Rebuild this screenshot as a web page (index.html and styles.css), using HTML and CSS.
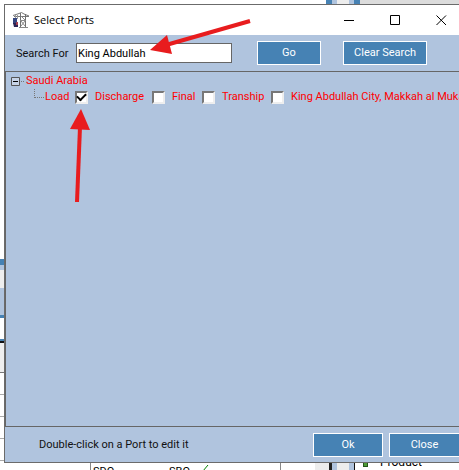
FILE: index.html
```
<!DOCTYPE html>
<html lang="en">
<head>
<meta charset="utf-8">
<title>Select Ports</title>
<link rel="stylesheet" href="styles.css">
</head>
<body>
<div class="desktop">
  <div class="strip-top"><span class="frame frame-top"></span></div>
  <div class="strip-left">
    <i class="blank"></i><i class="blue"></i><i class="pale"></i><i class="panel"></i><i class="steel"></i><i class="edge"></i><i class="gap"></i><i class="rule"></i><i class="head"></i><i class="cell"></i><i class="cell"></i><i class="cell"></i><i class="cell"></i>
  </div>
  <main class="dialog">
    <header class="titlebar">
      <svg class="app-icon" width="17" height="16" viewBox="0 0 17 16">
        <path d="M0 3.500 6 1.500M1 4.500H16M6 1.500 8.500 .5 11 2 16 4" fill="none" stroke="#777"/>
        <path d="M2.500 3V9M4.500 3V7" stroke="#999" fill="none"/>
        <path d="M7.500 1V15M12.500 2V15" fill="none" stroke="#707070"/>
        <path d="M7 8.500H13M8 9 12 14M12 9 8 14M8 4 12 8" fill="none" stroke="#8a8a8a"/>
        <path d="M6 15.500H15" stroke="#888"/>
        <path d="M0 6H4V12H0z" fill="#34457f"/><path d="M0 11H5V15H1z" fill="#2b2454"/><path d="M3 10H5V13H3z" fill="#a23f50"/>
      </svg>
      <h1>Select Ports</h1>
      <div class="window-controls">
        <button aria-label="Minimize"><svg width="11" height="11"><path d="M0 5.500H10"/></svg></button>
        <button aria-label="Maximize"><svg width="11" height="11"><path d="M.5 .5H9.500V9.500H.5z"/></svg></button>
        <button aria-label="Close window"><svg width="11" height="11"><path d="M.5 .5 10 10M10 .5 .5 10"/></svg></button>
      </div>
    </header>
    <form class="search">
      <label for="port">Search For</label>
      <input id="port" type="text" value="King Abdullah">
      <button class="btn go" type="button">Go</button>
      <button class="btn clear" type="button">Clear Search</button>
    </form>
    <section class="tree">
      <div class="country">
        <svg width="17" height="9"><path d="M.5 .5H8.500V8.500H.5z" fill="#c6d3e6" stroke="#555"/><path d="M2 4.500H7" stroke="#000"/><path d="M10 4.500H14" stroke="#777" stroke-dasharray="1 1"/></svg>
        <span>Saudi Arabia</span>
      </div>
      <div class="port">
        <svg class="branch" width="11" height="14"><path d="M.5 0V9M1 8.500H10" fill="none" stroke="#777" stroke-dasharray="1 1"/></svg>
        <label>Load <input type="checkbox" checked></label>
        <label>Discharge <input type="checkbox"></label>
        <label>Final <input type="checkbox"></label>
        <label>Tranship <input type="checkbox"></label>
        <span>King Abdullah City, Makkah al Mukarramah</span>
      </div>
    </section>
    <footer class="footer">
      <p>Double-click on a Port to edit it</p>
      <button class="btn ok">Ok</button>
      <button class="btn close">Close</button>
    </footer>
  </main>
  <div class="strip-bottom">
    <span class="col-a"></span>
    <span class="col-b"><b>SDO</b><b>SBO</b><svg width="8" height="7"><path d="M1 5 2 6 7 0" stroke="#008000" fill="none"/></svg></span>
    <span class="frame frame-bottom"></span>
    <span class="product"><i></i><em>Product</em></span>
  </div>
  <svg class="arrows" width="260" height="210" viewBox="0 0 260 210">
    <path d="M250 21 166 45" stroke="#e81c1e" stroke-width="4"/>
    <path d="M150 50 167 35 172 54z" fill="#e81c1e"/>
    <path d="M77 202 80 127" stroke="#e81c1e" stroke-width="4"/>
    <path d="M81 109 70 129 90 130z" fill="#e81c1e"/>
  </svg>
</div>
</body>
</html>
```
FILE: styles.css
```
* { box-sizing: border-box; }
body { margin: 0; font: 11px/16px Roboto, "Liberation Sans", sans-serif; color: #111; background: #fff; }
button, input { font: inherit; margin: 0; }
.desktop {
  position: relative;
  display: grid;
  grid-template: 4px 1fr 7px / 4px minmax(0, 1fr);
  height: 100vh;
  overflow: hidden;
}
.strip-top { grid-column: 1 / 3; display: flex; padding-left: 326px; }
.frame { background: linear-gradient(90deg, #4682b4 6px, #b0c4de 6px 11px, #ededed 11px 23px, #b0c4de 23px 28px, #4682b4 28px 34px, #dcdcdc 34px); }
.frame-top { flex: 1; }
.strip-left { display: flex; flex-direction: column; overflow: hidden; }
.strip-left i { flex: none; }
.blank { height: 255px; }
.blue { height: 6px; background: #4682b4; }
.pale { height: 5px; background: #b0c4de; }
.panel { height: 18px; background: #eee; }
.steel { height: 27px; background: #b0c4de; }
.edge { height: 3px; background: #4682b4; }
.gap { height: 21px; }
.rule { height: 4px; background: #111; border-top: 2px solid #4682b4; }
.head { height: 30px; background: #eee; border-bottom: 1px solid #777; }
.cell { height: 22px; border-bottom: 1px solid #aaa; }
.dialog {
  display: flex;
  flex-direction: column;
  overflow: hidden;
  background: #b0c4de;
  border: solid #6b6b6b;
  border-width: 1px 0 1px 1px;
}
.titlebar { display: flex; align-items: center; height: 30px; padding-left: 8px; background: #fff; flex: none; }
.titlebar h1 { margin: 0 0 0 4px; font: 12px/16px "Open Sans", sans-serif; font-size: 11px; color: #000; }
.window-controls { display: flex; margin: 0 -5px 0 auto; }
.window-controls button { width: 46px; height: 28px; padding: 0; border: 0; background: none; display: grid; place-items: center; }
.window-controls path { fill: none; stroke: #000; }
.search { display: flex; align-items: center; height: 36px; padding-left: 11px; flex: none; }
.search label { width: 60px; padding-top: 2px; }
.search input { width: 156px; height: 20px; padding: 0 1px; border: 1px solid #666; background: #fff; color: #000; }
.btn { height: 24px; padding: 0; border: 1px solid #fff; border-radius: 0; background: #4682b4; color: #fff; flex: none; }
.go { width: 64px; margin-left: 25px; }
.clear { width: 84px; margin-left: 22px; }
.tree { flex: 1; border: solid #666; border-width: 1px 0 1px 1px; padding: 1px 0 0 5px; overflow: hidden; color: #f00; }
.country { display: flex; align-items: center; height: 16px; }
.country span { margin-left: -2px; }
.port { display: grid; grid-template-columns: 4px 43px 70px 43px 62px auto; column-gap: 7px; align-items: center; height: 16px; padding-left: 23px; white-space: nowrap; }
.branch { align-self: start; }
.port label { display: flex; justify-content: space-between; align-items: center; }
.port input {
  appearance: none;
  width: 13px;
  height: 13px;
  border: 2px solid;
  border-color: #777 #eee #eee #777;
  background: #fff;
  display: grid;
  place-items: center;
}
.port input:checked::after { content: ""; width: 7px; height: 4px; border: solid #000; border-width: 0 0 2px 2px; transform: translateY(-1px) rotate(-45deg); }
.footer { display: flex; align-items: center; gap: 6px; height: 35px; padding-left: 34px; margin-right: -1px; flex: none; }
.footer p { margin: 0 auto 0 0; }
.ok { width: 70px; }
.close { width: 71px; }
.strip-bottom { grid-column: 1 / 3; display: flex; overflow: hidden; line-height: 14px; color: #000; }
.col-a { width: 91px; border-right: 1px solid #888; }
.col-b { display: flex; width: 190px; padding: 2px 0 0 2px; border-right: 1px solid #888; }
.col-b b { width: 76px; font-weight: 400; }
.col-b svg { margin-left: -44px; }
.frame-bottom { width: 74px; background: linear-gradient(90deg, #fff 34px, #ededed 34px 48px, #222 48px 51px, #b0c4de 51px 56px, #ededed 56px 68px, #b0c4de 68px 73px, #111 73px); }
.product { display: flex; padding-left: 8px; }
.product i { width: 5px; height: 4px; background: #4d9a35; border: solid #24551a; border-width: 0 1px 1px; }
.product em { margin: -8px 0 0 12px; font-style: normal; font-size: 12px; }
.arrows { position: absolute; left: 0; top: 0; pointer-events: none; }
```
